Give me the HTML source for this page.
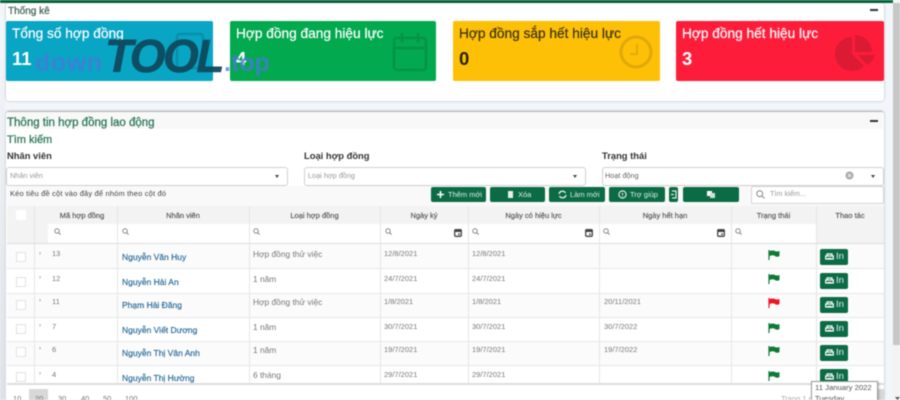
<!DOCTYPE html>
<html lang="vi"><head><meta charset="utf-8"><title>Hợp đồng lao động</title>
<style>
html,body{margin:0;padding:0;width:900px;height:400px;overflow:hidden;background:#f2f6fa}
body{font-family:"Liberation Sans",sans-serif;position:relative;color:#333}
#p{position:absolute;left:0;top:0;width:900px;height:400px;overflow:hidden;filter:blur(.45px)}
#p div,#p svg{position:absolute}
.t{white-space:nowrap;line-height:14px}
.box{background:#fff;border-radius:3px;box-shadow:0 0 2px rgba(0,0,0,.3)}
.card{top:21px;height:60px;border-radius:2px}
.ct{font-size:13.7px;line-height:18px;top:25px;white-space:nowrap;-webkit-text-stroke:.2px currentColor}
.cn{font-size:18.5px;font-weight:bold;line-height:22px;top:48px;white-space:nowrap}
.lbl{font-size:9.4px;font-weight:bold;color:#333;top:149px}
.inp{top:167px;height:17px;background:#fff;border:1px solid #d0d0d0;border-radius:3px}
.ph{font-size:7.3px;color:#999;top:169px}
.btn{top:187px;height:15px;background:#0b6b45;border-radius:2px}
.bt{font-size:7.5px;color:#dff0e8;top:188px}
.hd{font-size:7.5px;color:#555;top:209px;text-align:center;-webkit-text-stroke:.15px #555}
.vl{width:1px;background:#e6e6e6;top:206px;height:177px}
.hl{left:7px;width:877px;height:1px;background:#e8e8e8}
.c{font-size:7.5px;color:#777;white-space:nowrap;line-height:10px}
.w{font-size:8.4px}
.n{font-size:8.5px;color:#2f6f9a;white-space:nowrap;line-height:14px;left:122px;-webkit-text-stroke:.2px #2f6f9a;top:0}
.chk{left:16px;width:8px;height:8px;border:1px solid #e2e2e2;background:#fff}
.ar{left:39px;font-size:6px;color:#777;line-height:8px}
.in{left:820px;width:28px;height:16px;background:#0b6b45;border-radius:2px;color:#eef;font-size:9.5px;line-height:16px;text-indent:16px}
.pg{font-size:7.5px;color:#777;top:394px;line-height:10px}
</style></head><body><div id="p">

<div style="left:0;top:0;width:893px;height:3px;background:#05643c"></div>
<div style="left:893px;top:3px;width:7px;height:342px;background:#c6c6c6"></div>
<div style="left:893px;top:345px;width:7px;height:55px;background:#f3f3f3"></div>
<div style="left:0;top:60px;width:5px;height:340px;background:linear-gradient(#f0f3f7,#dfe3e8)"></div>

<!-- Thống kê -->
<div class="box" style="left:6px;top:3px;width:878px;height:98px"></div>
<div class="t" style="left:8px;top:5px;font-size:10px;color:#44665a;-webkit-text-stroke:.25px #44665a">Thống kê</div>
<div style="left:870px;top:9px;width:8px;height:2px;background:#333"></div>

<div class="card" style="left:6px;width:207px;background:#08a5c4"></div>
<div class="ct" style="left:12px;color:#fff">Tổng số hợp đồng</div>
<div class="cn" style="left:12px;color:#fff">11</div>
<svg style="left:175px;top:32px" width="30" height="38" viewBox="0 0 30 38"><rect x="2" y="2" width="26" height="34" rx="3" fill="none" stroke="#0a8fa9" stroke-width="2.5"/></svg>

<div class="card" style="left:230px;width:206px;background:#03a94f"></div>
<div class="ct" style="left:236px;color:#fff">Hợp đồng đang hiệu lực</div>
<div class="cn" style="left:236px;color:#fff">4</div>
<svg style="left:392px;top:32px" width="36" height="40" viewBox="0 0 36 40" fill="none" stroke="#049447" stroke-width="2.5"><rect x="2" y="6" width="32" height="32" rx="3"/><path d="M2 16H34M10 1V10M26 1V10"/></svg>

<div class="card" style="left:453px;width:207px;background:#fdc006"></div>
<div class="ct" style="left:459px;color:#3a3210">Hợp đồng sắp hết hiệu lực</div>
<div class="cn" style="left:459px;color:#2a2408">0</div>
<svg style="left:618px;top:34px" width="36" height="36" viewBox="0 0 36 36" fill="none" stroke="#e0a908" stroke-width="3"><circle cx="18" cy="18" r="15"/><path d="M19 10V20H12" stroke-width="1.8"/></svg>

<div class="card" style="left:676px;width:208px;background:#fd1d3a"></div>
<div class="ct" style="left:682px;color:#fff">Hợp đồng hết hiệu lực</div>
<div class="cn" style="left:682px;color:#fff">3</div>
<svg style="left:834px;top:34px" width="42" height="38" viewBox="0 0 42 38" fill="#dc1a33"><path d="M18 3A17 17 0 1 0 30 32L18 20Z"/><path d="M21 1A17 17 0 0 1 38 18H21Z"/><path d="M24 21H41A17 17 0 0 1 33 31Z"/></svg>

<!-- Thông tin -->
<div class="box" style="left:6px;top:111px;width:878px;height:289px;border-top:1px solid #b5b5b5"></div>
<div style="left:7px;top:112px;width:876px;height:17px;background:#f8f8f8"></div>
<div class="t" style="left:7px;top:116px;font-size:11.5px;color:#2f7a5c;-webkit-text-stroke:.3px #2f7a5c">Thông tin hợp đồng lao động</div>
<div style="left:870px;top:120px;width:8px;height:2px;background:#333"></div>
<div class="t" style="left:7px;top:133px;font-size:11px;color:#2f7a5c;-webkit-text-stroke:.3px #2f7a5c">Tìm kiếm</div>

<div class="t lbl" style="left:7px">Nhân viên</div>
<div class="t lbl" style="left:304px">Loại hợp đồng</div>
<div class="t lbl" style="left:602px">Trạng thái</div>

<div class="inp" style="left:6px;width:280px"></div>
<div class="inp" style="left:304px;width:280px"></div>
<div class="inp" style="left:602px;width:280px"></div>
<div class="t ph" style="left:10px">Nhân viên</div>
<div class="t ph" style="left:308px">Loại hợp đồng</div>
<div class="t ph" style="left:605px;color:#666">Hoạt động</div>
<svg style="left:275px;top:175px" width="4" height="3"><path d="M0 0H4L2 3Z" fill="#444"/></svg>
<svg style="left:573px;top:175px" width="4" height="3"><path d="M0 0H4L2 3Z" fill="#444"/></svg>
<svg style="left:871px;top:175px" width="4" height="3"><path d="M0 0H4L2 3Z" fill="#444"/></svg>
<svg style="left:845px;top:171px" width="9" height="9" viewBox="0 0 9 9"><circle cx="4.5" cy="4.5" r="4" fill="#aaa"/><path d="M3 3L6 6M6 3L3 6" stroke="#eee"/></svg>

<!-- toolbar -->
<div style="left:7px;top:186px;width:876px;height:20px;background:#f9f9f9"></div>
<div class="t" style="left:10px;top:187px;font-size:7.5px;color:#444;letter-spacing:.17px">Kéo tiêu đề cột vào đây để nhóm theo cột đó</div>

<div class="btn" style="left:431px;width:55px"></div>
<div class="btn" style="left:490px;width:55px"></div>
<div class="btn" style="left:549px;width:56px"></div>
<div class="btn" style="left:609px;width:56px"></div>
<div class="btn" style="left:669px;width:9px"></div>
<div class="btn" style="left:683px;width:56px"></div>
<svg style="left:436px;top:190px" width="9" height="9"><path d="M4.500 1V8M1 4.500H8" stroke="#fff" stroke-width="1.6"/></svg>
<div class="t bt" style="left:448px">Thêm mới</div>
<svg style="left:507px;top:190px" width="7" height="9"><path d="M1 1H6V8H1Z" fill="#e8efe9"/></svg>
<div class="t bt" style="left:518px">Xóa</div>
<svg style="left:558px;top:190px" width="9" height="9" viewBox="0 0 9 9" fill="none" stroke="#fff" stroke-width="1.2"><path d="M1 4A3.500 3.500 0 0 1 7.500 3M8 5A3.500 3.500 0 0 1 1.500 6"/></svg>
<div class="t bt" style="left:570px">Làm mới</div>
<svg style="left:618px;top:190px" width="9" height="9" viewBox="0 0 9 9"><circle cx="4.500" cy="4.500" r="3.600" fill="none" stroke="#fff"/><path d="M4.500 3V5M4.500 6V6.800" stroke="#fff"/></svg>
<div class="t bt" style="left:630px">Trợ giúp</div>
<svg style="left:671px;top:190px" width="6" height="9" viewBox="0 0 6 9" fill="none" stroke="#fff"><path d="M1 1H5V8H1M0 4.500H3"/></svg>
<svg style="left:706px;top:190px" width="10" height="9"><rect x="1" y="1" width="5" height="5" fill="#fff"/><rect x="4" y="3" width="5" height="5" fill="#cfe0d8"/></svg>

<div style="left:751px;top:186px;width:131px;height:16px;background:#fff;border:1px solid #d5d5d5;border-radius:2px"></div>
<svg style="left:756px;top:190px" width="9" height="9" viewBox="0 0 9 9" fill="none" stroke="#888"><circle cx="3.700" cy="3.700" r="2.900"/><path d="M6 6L8.500 8.500"/></svg>
<div class="t ph" style="left:770px;top:187px">Tìm kiếm...</div>

<!-- grid -->
<div style="left:7px;top:206px;width:877px;height:18px;background:#f3f3f3"></div>
<div style="left:7px;top:224px;width:41px;height:19px;background:#f3f3f3"></div>
<div style="left:816px;top:224px;width:68px;height:19px;background:#f3f3f3"></div>
<div style="left:7px;top:243px;width:877px;height:25px;background:#fbfbfb"></div>
<div style="left:7px;top:293px;width:877px;height:24px;background:#fbfbfb"></div>
<div style="left:7px;top:341px;width:877px;height:24px;background:#fbfbfb"></div>

<div class="chk" style="top:210px;border-color:#fff"></div>

<div class="vl" style="left:34px"></div>
<div class="vl" style="left:117px"></div>
<div class="vl" style="left:249px"></div>
<div class="vl" style="left:380px"></div>
<div class="vl" style="left:468px"></div>
<div class="vl" style="left:599px"></div>
<div class="vl" style="left:731px"></div>
<div class="vl" style="left:816px"></div>
<div class="hl" style="top:243px;background:#ddd"></div>
<div class="hl" style="top:268px"></div>
<div class="hl" style="top:293px"></div>
<div class="hl" style="top:317px"></div>
<div class="hl" style="top:341px"></div>
<div class="hl" style="top:365px"></div>
<div class="hl" style="top:383px;height:2px;background:#ddd"></div>

<div class="t hd" style="left:34px;width:96px">Mã hợp đồng</div>
<div class="t hd" style="left:117px;width:132px">Nhân viên</div>
<div class="t hd" style="left:249px;width:131px">Loại hợp đồng</div>
<div class="t hd" style="left:380px;width:88px">Ngày ký</div>
<div class="t hd" style="left:468px;width:131px">Ngày có hiệu lực</div>
<div class="t hd" style="left:599px;width:132px">Ngày hết hạn</div>
<div class="t hd" style="left:731px;width:85px">Trạng thái</div>
<div class="t hd" style="left:816px;width:68px">Thao tác</div>

<!-- filter icons -->
<svg style="left:54px;top:228px" width="7" height="7" viewBox="0 0 7 7" fill="none" stroke="#888"><circle cx="3" cy="3" r="2.200"/><path d="M4.600 4.600L6.600 6.600"/></svg>
<svg style="left:122px;top:228px" width="7" height="7" viewBox="0 0 7 7" fill="none" stroke="#888"><circle cx="3" cy="3" r="2.200"/><path d="M4.600 4.600L6.600 6.600"/></svg>
<svg style="left:253px;top:228px" width="7" height="7" viewBox="0 0 7 7" fill="none" stroke="#888"><circle cx="3" cy="3" r="2.200"/><path d="M4.600 4.600L6.600 6.600"/></svg>
<svg style="left:385px;top:228px" width="7" height="7" viewBox="0 0 7 7" fill="none" stroke="#888"><circle cx="3" cy="3" r="2.200"/><path d="M4.600 4.600L6.600 6.600"/></svg>
<svg style="left:472px;top:228px" width="7" height="7" viewBox="0 0 7 7" fill="none" stroke="#888"><circle cx="3" cy="3" r="2.200"/><path d="M4.600 4.600L6.600 6.600"/></svg>
<svg style="left:603px;top:228px" width="7" height="7" viewBox="0 0 7 7" fill="none" stroke="#888"><circle cx="3" cy="3" r="2.200"/><path d="M4.600 4.600L6.600 6.600"/></svg>
<svg style="left:735px;top:228px" width="7" height="7" viewBox="0 0 7 7" fill="none" stroke="#888"><circle cx="3" cy="3" r="2.200"/><path d="M4.600 4.600L6.600 6.600"/></svg>
<svg style="left:454px;top:229px" width="8" height="8" viewBox="0 0 8 8"><rect x=".7" y=".7" width="6.600" height="6.600" rx="1" fill="none" stroke="#444" stroke-width="1.300"/><rect x="1" y="1" width="6" height="2" fill="#444"/><rect x="4.200" y="4.400" width="1.600" height="1.600" fill="#444"/></svg>
<svg style="left:585px;top:229px" width="8" height="8" viewBox="0 0 8 8"><rect x=".7" y=".7" width="6.600" height="6.600" rx="1" fill="none" stroke="#444" stroke-width="1.300"/><rect x="1" y="1" width="6" height="2" fill="#444"/><rect x="4.200" y="4.400" width="1.600" height="1.600" fill="#444"/></svg>
<svg style="left:717px;top:229px" width="8" height="8" viewBox="0 0 8 8"><rect x=".7" y=".7" width="6.600" height="6.600" rx="1" fill="none" stroke="#444" stroke-width="1.300"/><rect x="1" y="1" width="6" height="2" fill="#444"/><rect x="4.200" y="4.400" width="1.600" height="1.600" fill="#444"/></svg>

<!-- row 1 -->
<div class="chk" style="top:252px"></div><div class="ar" style="top:250px">›</div>
<div class="c" style="left:52px;top:249px">13</div>
<div class="n" style="top:250px">Nguyễn Văn Huy</div>
<div class="c w" style="left:253px;top:249px">Hợp đồng thử việc</div>
<div class="c" style="left:384px;top:249px">12/8/2021</div>
<div class="c" style="left:472px;top:249px">12/8/2021</div>
<!-- row 2 -->
<div class="chk" style="top:277px"></div><div class="ar" style="top:274px">›</div>
<div class="c" style="left:52px;top:274px">12</div>
<div class="n" style="top:275px">Nguyễn Hải An</div>
<div class="c w" style="left:253px;top:274px">1 năm</div>
<div class="c" style="left:384px;top:274px">24/7/2021</div>
<div class="c" style="left:472px;top:274px">24/7/2021</div>
<!-- row 3 -->
<div class="chk" style="top:300px"></div><div class="ar" style="top:297px">›</div>
<div class="c" style="left:52px;top:297px">11</div>
<div class="n" style="top:298px">Phạm Hải Đăng</div>
<div class="c w" style="left:253px;top:297px">Hợp đồng thử việc</div>
<div class="c" style="left:384px;top:297px">1/8/2021</div>
<div class="c" style="left:472px;top:297px">1/8/2021</div>
<div class="c" style="left:604px;top:297px">20/11/2021</div>
<!-- row 4 -->
<div class="chk" style="top:324px"></div><div class="ar" style="top:322px">›</div>
<div class="c" style="left:52px;top:322px">7</div>
<div class="n" style="top:323px">Nguyễn Viết Dương</div>
<div class="c w" style="left:253px;top:322px">1 năm</div>
<div class="c" style="left:384px;top:322px">30/7/2021</div>
<div class="c" style="left:472px;top:322px">30/7/2021</div>
<div class="c" style="left:604px;top:322px">30/7/2022</div>
<!-- row 5 -->
<div class="chk" style="top:347px"></div><div class="ar" style="top:345px">›</div>
<div class="c" style="left:52px;top:345px">6</div>
<div class="n" style="top:346px">Nguyễn Thị Vân Anh</div>
<div class="c w" style="left:253px;top:345px">1 năm</div>
<div class="c" style="left:384px;top:345px">19/7/2021</div>
<div class="c" style="left:472px;top:345px">19/7/2021</div>
<div class="c" style="left:604px;top:345px">19/7/2022</div>
<!-- row 6 -->
<div class="chk" style="top:372px"></div><div class="ar" style="top:370px">›</div>
<div class="c" style="left:52px;top:370px">4</div>
<div class="n" style="top:371px">Nguyễn Thị Hường</div>
<div class="c w" style="left:253px;top:370px">6 tháng</div>
<div class="c" style="left:384px;top:370px">29/7/2021</div>
<div class="c" style="left:472px;top:370px">29/7/2021</div>

<!-- flags -->
<svg style="left:768px;top:250px" width="12" height="10" viewBox="0 0 12 10"><path d="M1 0V10" stroke="#0c7c35" stroke-width="1.200"/><path d="M1.500 1Q5 0 7 1T11.500 1V6Q9 7.500 7 6T1.500 6Z" fill="#0c7c35"/></svg>
<svg style="left:768px;top:274px" width="12" height="10" viewBox="0 0 12 10"><path d="M1 0V10" stroke="#0c7c35" stroke-width="1.200"/><path d="M1.500 1Q5 0 7 1T11.500 1V6Q9 7.500 7 6T1.500 6Z" fill="#0c7c35"/></svg>
<svg style="left:768px;top:298px" width="12" height="10" viewBox="0 0 12 10"><path d="M1 0V10" stroke="#f01525" stroke-width="1.200"/><path d="M1.500 1Q5 0 7 1T11.500 1V6Q9 7.500 7 6T1.500 6Z" fill="#f01525"/></svg>
<svg style="left:768px;top:323px" width="12" height="10" viewBox="0 0 12 10"><path d="M1 0V10" stroke="#0c7c35" stroke-width="1.200"/><path d="M1.500 1Q5 0 7 1T11.500 1V6Q9 7.500 7 6T1.500 6Z" fill="#0c7c35"/></svg>
<svg style="left:768px;top:346px" width="12" height="10" viewBox="0 0 12 10"><path d="M1 0V10" stroke="#0c7c35" stroke-width="1.200"/><path d="M1.500 1Q5 0 7 1T11.500 1V6Q9 7.500 7 6T1.500 6Z" fill="#0c7c35"/></svg>
<svg style="left:768px;top:371px" width="12" height="10" viewBox="0 0 12 10"><path d="M1 0V10" stroke="#0c7c35" stroke-width="1.200"/><path d="M1.500 1Q5 0 7 1T11.500 1V6Q9 7.500 7 6T1.500 6Z" fill="#0c7c35"/></svg>

<!-- In buttons -->
<div class="in" style="top:249px">In</div>
<div class="in" style="top:273px">In</div>
<div class="in" style="top:297px">In</div>
<div class="in" style="top:321px">In</div>
<div class="in" style="top:345px">In</div>
<div class="in" style="top:369px;height:14px;overflow:hidden">In</div>
<svg style="left:825px;top:253px" width="9" height="8" viewBox="0 0 9 8" fill="none" stroke="#fff" stroke-width="1.200"><path d="M2 3V1H7V3M.7 3H8.300V6H.7ZM2.500 5.500H6.500"/></svg>
<svg style="left:825px;top:277px" width="9" height="8" viewBox="0 0 9 8" fill="none" stroke="#fff" stroke-width="1.200"><path d="M2 3V1H7V3M.7 3H8.300V6H.7ZM2.500 5.500H6.500"/></svg>
<svg style="left:825px;top:301px" width="9" height="8" viewBox="0 0 9 8" fill="none" stroke="#fff" stroke-width="1.200"><path d="M2 3V1H7V3M.7 3H8.300V6H.7ZM2.500 5.500H6.500"/></svg>
<svg style="left:825px;top:325px" width="9" height="8" viewBox="0 0 9 8" fill="none" stroke="#fff" stroke-width="1.200"><path d="M2 3V1H7V3M.7 3H8.300V6H.7ZM2.500 5.500H6.500"/></svg>
<svg style="left:825px;top:349px" width="9" height="8" viewBox="0 0 9 8" fill="none" stroke="#fff" stroke-width="1.200"><path d="M2 3V1H7V3M.7 3H8.300V6H.7ZM2.500 5.500H6.500"/></svg>
<svg style="left:825px;top:373px" width="9" height="8" viewBox="0 0 9 8" fill="none" stroke="#fff" stroke-width="1.200"><path d="M2 3V1H7V3M.7 3H8.300V6H.7ZM2.500 5.500H6.500"/></svg>

<!-- pager -->
<div style="left:29px;top:389px;width:19px;height:11px;background:#d8d8d8"></div>
<div class="pg" style="left:13px">10</div>
<div class="pg" style="left:35px">20</div>
<div class="pg" style="left:58px">30</div>
<div class="pg" style="left:81px">40</div>
<div class="pg" style="left:103px">50</div>
<div class="pg" style="left:125px">100</div>
<div class="pg" style="left:781px;color:#aaa">Trang 1 c</div>
<div style="left:877px;top:389px;width:7px;height:11px;background:#d8d8d8"></div>
<svg style="left:895px;top:397px" width="5" height="3"><path d="M0 0H5L2.500 3Z" fill="#555"/></svg>

<!-- tooltip -->
<div style="left:811px;top:381px;width:65px;height:30px;background:#fff;border:1px solid #999;box-shadow:1px 1px 2px rgba(0,0,0,.25)"></div>
<div class="t" style="left:815px;top:381px;font-size:7.7px;color:#555">11 January 2022</div>
<div class="t" style="left:815px;top:392px;font-size:7.7px;color:#555">Tuesday</div>

<!-- watermark -->
<div class="t" style="left:35px;top:46px;font-size:25px;line-height:34px;font-weight:bold;color:#4a78dc;opacity:.75;letter-spacing:.6px">down</div>
<div class="t" style="left:105px;top:30px;font-size:46px;line-height:52px;font-weight:bold;font-style:italic;color:#0e4a5e;opacity:.95;letter-spacing:-2.5px;-webkit-text-stroke:.6px #0e4a5e">TOOL</div>
<div class="t" style="left:224px;top:46px;font-size:25px;line-height:34px;font-weight:bold;color:#4a78dc;opacity:.75">.top</div>

</div></body></html>
